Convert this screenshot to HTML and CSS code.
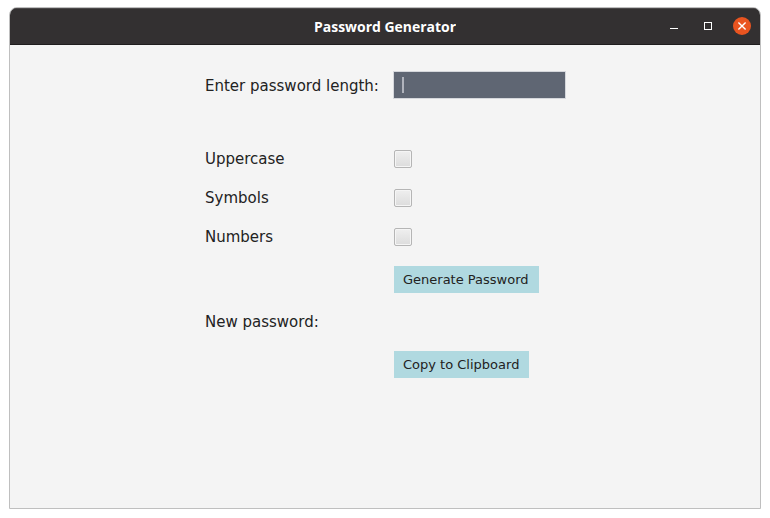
FILE: index.html
```html
<!DOCTYPE html>
<html lang="en">
<head>
<meta charset="utf-8">
<title>Password Generator</title>
<link rel="stylesheet" href="styles.css">
</head>
<body>
<main class="window">
  <header class="titlebar">
    <h1 class="title"><svg class="title-svg" width="142" height="24"><text x="0" y="17" textLength="142" lengthAdjust="spacingAndGlyphs">Password Generator</text></svg></h1>
    <svg class="controls" width="86" height="20" viewBox="0 0 86 20">
      <path d="M4 11.5h8" stroke="#fff"/>
      <rect x="38.5" y="5.5" width="7" height="7" fill="none" stroke="#fff"/>
      <circle cx="76" cy="9" r="9" fill="#e95420"/>
      <path d="M72.4 5.4l7.2 7.2M79.6 5.4l-7.2 7.2" stroke="#fff" stroke-width="1.4"/>
    </svg>
  </header>
  <form class="form">
    <label class="label length-label" for="length">Enter password length:</label>
    <div class="field" id="length"><span class="caret"></span></div>
    <div class="spacer"></div>
    <span class="label upper">Uppercase</span><span class="check"></span>
    <span class="label symbols">Symbols</span><span class="check"></span>
    <span class="label numbers">Numbers</span><span class="check"></span>
    <button class="button generate" type="button">Generate Password</button>
    <span class="label result">New password:</span>
    <button class="button copy" type="button">Copy to Clipboard</button>
  </form>
</main>
</body>
</html>
```
FILE: styles.css
```css
* { box-sizing: border-box; }
body { margin: 0; background: #fff; font-family: "DejaVu Sans", sans-serif; }
.window {
  width: 752px;
  height: 502px;
  margin: 7px 0 0 9px;
  border: 1px solid #bfbfbf;
  border-radius: 8px 8px 0 0;
  background: #f4f4f4;
  overflow: hidden;
}
.titlebar {
  height: 37px;
  display: grid;
  grid-template-columns: 1fr auto 1fr;
  align-items: center;
  background: #333031;
  border-top: 1px solid #4b4849;
  border-bottom: 1px solid #1f1d1e;
}
.title { grid-column: 2; margin: 0; height: 24px; line-height: 0; }
.title-svg { font: bold 14px "Open Sans", sans-serif; fill: #fff; }
.controls { justify-self: end; margin-right: 8px; }
.form {
  display: grid;
  grid-template-columns: 188px 173px;
  grid-template-rows: 28px 10px 19px 19px 19px 27px 18px 27px;
  row-gap: 20px;
  margin: 26px 0 0 195px;
}
.label {
  align-self: center;
  font-size: 15px;
  line-height: 18px;
  color: #222;
  white-space: nowrap;
}
.length-label { padding-top: 2px; }
.result { grid-column: 1 / -1; }
.field {
  display: flex;
  align-items: center;
  padding-left: 8px;
  background: #5f6673;
  border: 1px solid #d5d7dc;
}
.caret { width: 2px; height: 16px; background: #b0b3bc; }
.spacer { grid-column: 1 / -1; }
.check {
  align-self: end;
  width: 18px;
  height: 18px;
  margin-left: 1px;
  border: 1px solid #b5b5b5;
  border-radius: 2px;
  background: linear-gradient(#efefef, #dcdcdc);
  box-shadow: inset 0 0 0 1px #f5f5f5;
}
.button {
  grid-column: 2;
  justify-self: start;
  height: 27px;
  margin: 0 0 0 1px;
  padding: 0 0 0 9px;
  border: 0;
  background: #b0d9e0;
  color: #222;
  font: 13px "DejaVu Sans", sans-serif;
  text-align: left;
  white-space: nowrap;
}
.generate { width: 145px; }
.copy { width: 135px; }
```
